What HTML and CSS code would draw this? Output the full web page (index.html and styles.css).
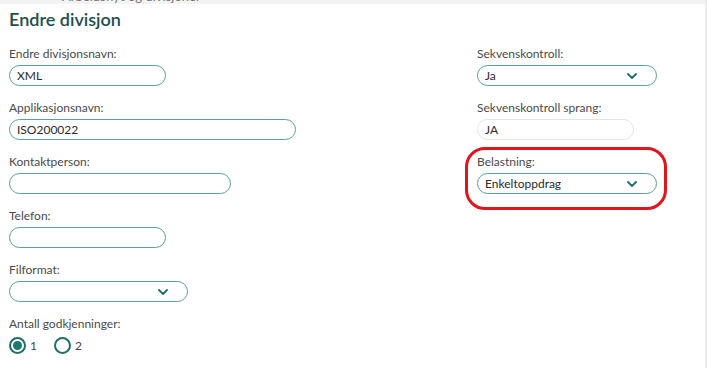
FILE: index.html
```html
<!DOCTYPE html>
<html lang="no">
<head>
<meta charset="utf-8">
<title>Endre divisjon</title>
<link rel="stylesheet" href="styles.css">
</head>
<body>
<div class="topbar"><span class="topbar-text">Arbeidsflyt og divisjoner</span></div>
<main class="panel">
  <h1 class="title">Endre divisjon</h1>
  <div class="columns">
    <div class="col col-left">
      <div class="field">
        <label class="label">Endre divisjonsnavn:</label>
        <div class="input w157">XML</div>
      </div>
      <div class="field">
        <label class="label">Applikasjonsnavn:</label>
        <div class="input w287">ISO200022</div>
      </div>
      <div class="field">
        <label class="label">Kontaktperson:</label>
        <div class="input w222"></div>
      </div>
      <div class="field">
        <label class="label">Telefon:</label>
        <div class="input w157"></div>
      </div>
      <div class="field">
        <label class="label">Filformat:</label>
        <div class="input select w179"><span class="value"></span>
          <svg class="chev" viewBox="0 0 10 6" width="10" height="6"><path d="M1 1 L5 5 L9 1" fill="none" stroke="#1f6f66" stroke-width="1.8" stroke-linecap="round" stroke-linejoin="round"/></svg>
        </div>
      </div>
      <div class="field last">
        <label class="label">Antall godkjenninger:</label>
        <div class="radios">
          <span class="radio checked"><span class="dot"></span></span><span class="radio-label">1</span>
          <span class="radio"></span><span class="radio-label">2</span>
        </div>
      </div>
    </div>
    <div class="col col-right">
      <div class="field">
        <label class="label">Sekvenskontroll:</label>
        <div class="input select w180"><span class="value">Ja</span>
          <svg class="chev" viewBox="0 0 10 6" width="10" height="6"><path d="M1 1 L5 5 L9 1" fill="none" stroke="#1f6f66" stroke-width="1.8" stroke-linecap="round" stroke-linejoin="round"/></svg>
        </div>
      </div>
      <div class="field">
        <label class="label">Sekvenskontroll sprang:</label>
        <div class="input disabled w157">JA</div>
      </div>
      <div class="highlight">
        <div class="field last">
          <label class="label">Belastning:</label>
          <div class="input select w180"><span class="value">Enkeltoppdrag</span>
            <svg class="chev" viewBox="0 0 10 6" width="10" height="6"><path d="M1 1 L5 5 L9 1" fill="none" stroke="#1f6f66" stroke-width="1.8" stroke-linecap="round" stroke-linejoin="round"/></svg>
          </div>
        </div>
      </div>
    </div>
  </div>
</main>
</body>
</html>
```
FILE: styles.css
```css
* { box-sizing: border-box; }
html, body { margin: 0; padding: 0; background: #fff; }
body {
  font-family: Lato, "Noto Sans", "Liberation Sans", sans-serif;
  color: #333;
  width: 707px;
  height: 368px;
  overflow: hidden;
  border-right: 2px solid #ececec;
}
.topbar {
  height: 4px;
  background: #f3f3f3;
  overflow: hidden;
  padding-left: 62px;
}
.topbar-text {
  display: block;
  margin-top: -10px;
  font-size: 13px;
  line-height: 13px;
  color: #777;
}
.panel { padding: 0 0 0 9px; }
.title {
  margin: 3px 0 0 0;
  font-size: 18px;
  line-height: 24px;
  font-weight: 600;
  color: #1d4e4f;
}
.columns {
  display: grid;
  grid-template-columns: 468px 1fr;
  margin-top: 15px;
}
.field { margin-bottom: 14px; }
.field.last { margin-bottom: 0; }
.label {
  display: block;
  font-size: 12px;
  line-height: 15px;
  color: #4a4a4a;
  margin-bottom: 4px;
}
.input {
  height: 21px;
  border: 1.5px solid #5e9f97;
  border-radius: 11px;
  padding: 0 8px 0 7px;
  font-size: 12px;
  line-height: 18px;
  color: #2a2a2a;
  display: flex;
  align-items: center;
}
.input.disabled { border-color: #dfe6e4; }
.select { justify-content: space-between; padding-right: 19px; }
.chev { display: block; flex: none; }
.w157 { width: 157px; }
.w180 { width: 180px; }
.w179 { width: 179px; }
.w222 { width: 222px; }
.w287 { width: 287px; }
.radios {
  display: flex;
  align-items: center;
  margin-top: 6px;
  height: 17px;
}
.radio {
  width: 17px;
  height: 17px;
  border: 2px solid #1f6f66;
  border-radius: 50%;
  display: flex;
  align-items: center;
  justify-content: center;
  flex: none;
}
.radio .dot {
  width: 9px;
  height: 9px;
  border-radius: 50%;
  background: #1a7a6d;
}
.radio-label {
  font-size: 12px;
  color: #444;
  margin: 0 17px 0 4px;
}
.highlight {
  width: 202px;
  margin: -7px 0 0 -12px;
  padding: 4px 7px 13px 9px;
  border: 3px solid #e0161f;
  border-radius: 20px;
}
```
